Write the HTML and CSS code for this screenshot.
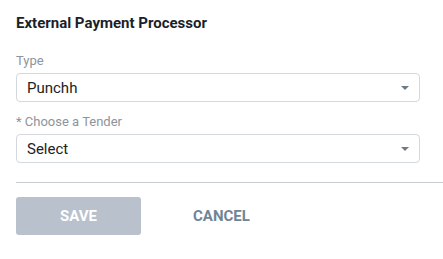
FILE: index.html
```html
<!DOCTYPE html>
<html lang="en">
<head>
    <meta charset="utf-8">
    <title>External Payment Processor</title>
    <link rel="stylesheet" href="styles.css">
</head>
<body>
    <div class="panel">
        <h3 class="title">External Payment Processor</h3>
        <div class="field">
            <label class="label">Type</label>
            <div class="select">
                <span>Punchh</span>
                <span class="caret"></span>
            </div>
        </div>
        <div class="field">
            <label class="label">* Choose a Tender</label>
            <div class="select">
                <span>Select</span>
                <span class="caret"></span>
            </div>
        </div>
        <div class="divider"></div>
        <div class="actions">
            <button class="btn btn-save" disabled>SAVE</button>
            <button class="btn btn-cancel">CANCEL</button>
        </div>
    </div>
</body>
</html>
```

FILE: styles.css
```css
body {
    margin: 0;
    font-family: Roboto, "Liberation Sans", sans-serif;
    background: #fff;
}

.panel {
    padding: 12px 0 0 16px;
}

.title {
    margin: 0 0 19px;
    font-size: 15px;
    font-weight: bold;
    color: #1b1f2b;
    line-height: 22px;
}

.field {
    margin-bottom: 12px;
    width: 404px;
}

.field + .field {
    margin-bottom: 0;
}

.label {
    display: block;
    font-size: 13px;
    color: #8d949c;
    line-height: 15px;
    margin-bottom: 5px;
}

.select {
    height: 27px;
    border: 1px solid #d3d8de;
    border-radius: 4px;
    display: flex;
    align-items: center;
    justify-content: space-between;
    padding: 0 10px 0 10px;
    font-size: 15px;
    color: #222;
}

.caret {
    width: 0;
    height: 0;
    border-left: 4px solid transparent;
    border-right: 4px solid transparent;
    border-top: 4px solid #6d7b88;
}

.divider {
    height: 1px;
    background: #c6cdd5;
    margin-top: 19px;
}

.actions {
    display: flex;
    align-items: center;
    margin-top: 14px;
}

.btn {
    font-family: Roboto, "Liberation Sans", sans-serif;
    font-weight: bold;
    font-size: 15px;
    border: none;
    background: none;
    padding: 0;
}

.btn-save {
    width: 125px;
    height: 38px;
    background: #b8c1cc;
    color: #fff;
    border-radius: 3px;
}

.btn-cancel {
    color: #6f8596;
    margin-left: 52px;
}
```
